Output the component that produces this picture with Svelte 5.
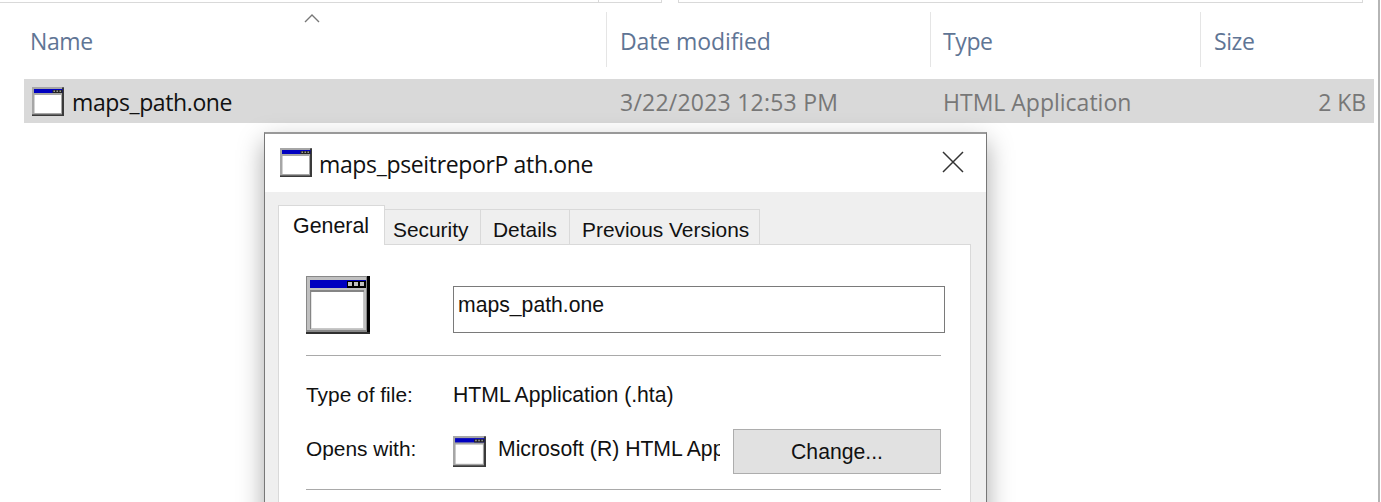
<script>
  const columns = ['Name', 'Date modified', 'Type', 'Size'];
  const tabs = ['General', 'Security', 'Details', 'Previous Versions'];
</script>

{#snippet appIcon(kind)}
  <svg class="app-icon {kind}" viewBox="0 0 64 58" preserveAspectRatio="none" aria-hidden="true">
    <rect width="64" height="58" fill="#888" />
    {#if kind === 'large'}
      <rect x="1" y="1" width="59" height="53" fill="#c0c0c0" />
      <rect x="61" y="0" width="3" height="58" fill="#000" />
      <rect x="0" y="56" width="64" height="2" fill="#303030" />
      <rect x="4" y="4" width="38" height="8" fill="#0000c0" />
      <rect x="41" y="4" width="19" height="8" fill="#000" />
      <rect x="41" y="4" width="19" height="1" fill="#0000c0" />
      <path d="M42 6h4v4h-4zM48 6h4v4h-4zM54 6h4v4h-4z" fill="#c0c0c0" />
      <rect x="4" y="14" width="54" height="39" fill="#858585" />
      <rect x="5" y="16" width="53" height="37" fill="#c8c8c8" />
      <rect x="5.5" y="16" width="51.5" height="36" fill="#fff" />
    {:else}
      <rect width="61" height="55" fill="#a6a6a6" />
      <rect x="60" y="1" width="4" height="57" fill="#3a3a3a" />
      <rect x="0" y="55" width="64" height="3" fill="#3a3a3a" />
      <rect x="4" y="4" width="57" height="8" fill="#0000c0" />
      <rect x="41" y="6" width="20" height="6" fill="#222" />
      <path d="M43 7h3v3h-3zM49 7h3v3h-3zM55 7h3v3h-3z" fill="#999" />
      <rect x="5" y="16" width="53" height="36" fill="#fff" />
    {/if}
  </svg>
{/snippet}

<div class="desktop">
  <main class="explorer">
    <div class="toolbar">
      <div class="address"><i></i></div>
      <div class="search"></div>
    </div>
    <div class="columns">
      {#each columns as name, i}
        <div class="column c{i}"><span>{name}</span></div>
      {/each}
      <svg class="sort" viewBox="0 0 16 10"><path d="M1 9 8 2l7 7" fill="none" stroke="#777" stroke-width="1.4" /></svg>
    </div>
    <div class="file">
      <div class="file-name">{@render appIcon('small')}<span>maps_path.one</span></div>
      <span class="date">3/22/2023 12:53 PM</span>
      <span class="type">HTML Application</span>
      <span class="size">2 KB</span>
    </div>
  </main>

  <section class="dialog">
    <header>
      {@render appIcon('small')}
      <span>maps_pseitreporP ath.one</span>
      <svg class="close" viewBox="0 0 22 22"><path d="m1 1 20 20M21 1 1 21" fill="none" stroke="#333" stroke-width="1.5" /></svg>
    </header>
    <nav>
      {#each tabs as tab, i}
        <div class="tab t{i}"><span>{tab}</span></div>
      {/each}
    </nav>
    <div class="panel">
      <div class="identity">
        {@render appIcon('large')}
        <div class="field"><span>maps_path.one</span></div>
      </div>
      <hr />
      <div class="line kind"><span class="label">Type of file:</span><span class="value">HTML Application (.hta)</span></div>
      <div class="line opener">
        <span class="label">Opens with:</span>
        {@render appIcon('medium')}
        <span class="program">Microsoft (R) HTML App</span>
        <button>Change...</button>
      </div>
      <hr />
    </div>
  </section>
</div>

<style>
  :global(body) { background: #fff; overflow: hidden; }
  .desktop { position: relative; width: 1381px; height: 502px; overflow: hidden; background: #fff; }
  .desktop, .desktop * { box-sizing: border-box; }
  span, button { white-space: pre; }
  .explorer { width: 1380px; height: 502px; border-right: 2px solid #b5b5b5; font: 23px/30px "Open Sans", sans-serif; letter-spacing: -.4px; }
  .toolbar { display: flex; gap: 16px; height: 12px; }
  .address { width: 662px; height: 3px; border: solid #d9d9d9; border-width: 0 1px 1px 0; }
  .address i { display: block; width: 599px; height: 2px; border-right: 1px solid #d9d9d9; }
  .search { width: 685px; height: 3px; border: 1px solid #d9d9d9; border-top: 0; }
  .columns { position: relative; display: flex; height: 67px; color: #5f7595; }
  .column { height: 55px; padding: 14px 0 0 12px; border-right: 1px solid #e5e5e5; }
  .c0 { width: 607px; padding-left: 30px; }
  .c1 { width: 324px; padding-left: 13px; letter-spacing: -.1px; }
  .c2 { width: 270px; }
  .c3 { border: 0; padding-left: 13px; }
  .sort { position: absolute; left: 304px; top: 1px; width: 16px; height: 10px; }
  .file { display: flex; align-items: center; width: 1350px; height: 44px; margin-left: 24px; padding: 1px 8px 0; background: #d9d9d9; color: #777; }
  .file-name { display: flex; align-items: center; gap: 8px; width: 588px; color: #111; }
  .file-name .app-icon { margin-top: -1px; }
  .date { width: 323px; letter-spacing: .23px; }
  .type { letter-spacing: 0; }
  .size { margin-left: auto; letter-spacing: -.1px; }
  .app-icon { display: block; flex: none; }
  .small { width: 32px; height: 29px; }
  .medium { width: 33px; height: 31px; }
  .large { width: 64px; height: 58px; }
  .dialog { position: absolute; left: 264px; top: 132px; width: 723px; height: 420px; border: 1px solid #777; border-top: 2px solid #999; background: #efefef; box-shadow: 0 10px 24px rgba(0, 0, 0, .34); font: 21.2px/26px "Liberation Sans", Arial, sans-serif; color: #111; }
  header { display: flex; align-items: center; height: 58px; padding: 0 22px 0 15px; background: #fff; font: 23px/30px "Open Sans", sans-serif; letter-spacing: -.35px; }
  header span { margin-left: 7px; padding-top: 2px; }
  header .app-icon { margin-top: -2px; }
  .close { width: 22px; height: 22px; margin: 0 0 2px auto; }
  nav { display: flex; align-items: flex-end; height: 52px; padding: 0 0 0 13px; font-size: 20.9px; }
  .tab { height: 35px; padding: 7px 0 0 8px; border: 1px solid #d9d9d9; border-left: 0; border-bottom: 0; }
  .t0 { position: relative; z-index: 1; width: 107px; height: 40px; margin-bottom: -1px; padding: 7px 0 0 14px; border-left: 1px solid #d9d9d9; background: #fff; font-size: 21.4px; }
  .t1 { width: 96px; }
  .t2 { width: 89px; padding-left: 12px; }
  .t3 { width: 190px; padding-left: 12px; }
  .panel { width: 693px; height: 350px; margin-left: 13px; padding: 31px 0 0 27px; border: 1px solid #d9d9d9; background: #fff; }
  .identity { display: flex; height: 79px; }
  .field { width: 492px; height: 47px; margin: 10px 0 0 83px; padding: 5px 0 0 4px; border: 1px solid #7a7a7a; }
  hr { width: 635px; height: 1px; margin: 0; border: 0; background: #a9a9a9; }
  .line { display: flex; }
  .kind { height: 73px; padding-top: 26px; }
  .opener { height: 60px; }
  .label { width: 147px; font-size: 20.9px; }
  .opener .label { padding-top: 7px; }
  .opener .app-icon { margin-top: 7px; }
  .program { width: 222px; margin: 7px 0 0 12px; height: 27px; overflow: hidden; }
  button { width: 208px; height: 45px; margin-left: 13px; padding: 0; border: 1px solid #adadad; background: #e1e1e1; font: inherit; color: #111; }
</style>
